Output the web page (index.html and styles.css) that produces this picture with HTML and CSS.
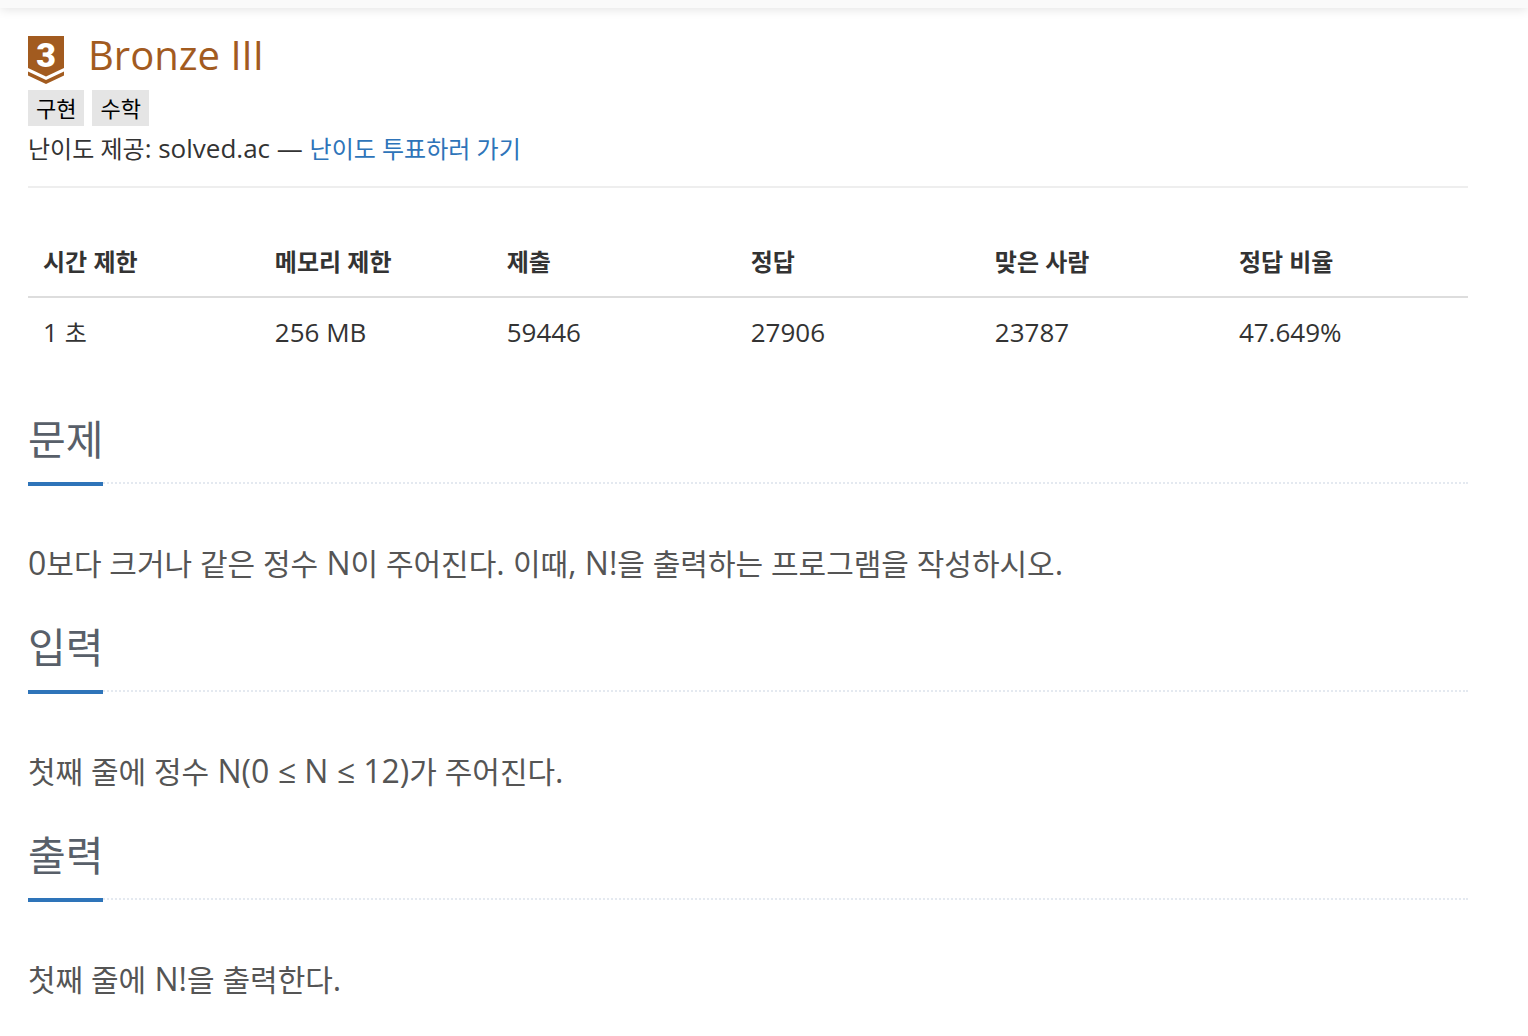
FILE: index.html
```html
<!DOCTYPE html>
<html lang="ko">
<head>
    <meta charset="UTF-8">
    <meta name="viewport" content="width=device-width, initial-scale=1.0">
    <title>Bronze III</title>
    <link rel="stylesheet" href="styles.css">
</head>
<body>

<header class="topbar"></header>

<main class="container">
    <div class="tier">
        <svg class="tier-icon" width="36" height="48" viewBox="0 0 36 48" aria-hidden="true">
            <path fill="#a25b1f" d="M0 0h36v32l-18 8.500l-18-8.500z"/>
            <path fill="#a25b1f" d="M0 35.500l18 8.500l18-8.500v4l-18 8.500l-18-8.500z"/>
            <text class="tier-number" x="18" y="31" text-anchor="middle">3</text>
        </svg>
        <h1>Bronze III</h1>
    </div>
    <div class="tags">
        <a href="#" class="tag">구현</a>
        <a href="#" class="tag">수학</a>
    </div>
    <p class="provider">난이도 제공<span class="latin">: solved.ac — </span><a href="#">난이도 투표하러 가기</a></p>
    <hr>

    <table class="info">
        <thead>
            <tr>
                <th class="limit">시간 제한</th>
                <th class="limit">메모리 제한</th>
                <th>제출</th>
                <th>정답</th>
                <th>맞은 사람</th>
                <th>정답 비율</th>
            </tr>
        </thead>
        <tbody>
            <tr>
                <td><span class="latin">1 </span>초</td>
                <td><span class="latin">256 MB</span></td>
                <td><span class="latin">59446</span></td>
                <td><span class="latin">27906</span></td>
                <td><span class="latin">23787</span></td>
                <td><span class="latin">47.649%</span></td>
            </tr>
        </tbody>
    </table>

    <section>
        <div class="headline"><h2>문제</h2></div>
        <p class="text"><span class="latin">0</span>보다 크거나 같은 정수<span class="latin"> N</span>이 주어진다<span class="latin">. </span>이때<span class="latin">, N!</span>을 출력하는 프로그램을 작성하시오<span class="latin">.</span></p>
    </section>
    <section>
        <div class="headline"><h2>입력</h2></div>
        <p class="text">첫째 줄에 정수<span class="latin"> N(0 ≤ N ≤ 12)</span>가 주어진다<span class="latin">.</span></p>
    </section>
    <section>
        <div class="headline"><h2>출력</h2></div>
        <p class="text">첫째 줄에<span class="latin"> N!</span>을 출력한다<span class="latin">.</span></p>
    </section>
</main>

</body>
</html>
```
FILE: styles.css
```css
body {
    margin: 0;
    font-family: "Open Sans", "Noto Sans CJK KR", sans-serif;
    font-size: 24px;
    line-height: 36px;
    color: #333;
    background-color: #fff;
}

a {
    color: #2e74b9;
    text-decoration: none;
}

h1, h2, p {
    margin: 0;
    font-weight: 400;
}

/* hangul is set a little smaller than the latin text beside it */
.latin {
    font-size: 26px;
}

.topbar {
    height: 8px;
    background-color: #fafafa;
    box-shadow: 0 0 12px rgba(0, 0, 0, 0.16);
}

.container {
    margin: 28px 60px 0 28px;
}

.tier {
    display: flex;
    gap: 24px;
    height: 48px;
}

.tier-icon {
    overflow: visible;
}

.tier h1 {
    font-size: 40px;
    line-height: 38px;
    color: #a25b1f;
}

.tier-number {
    font-family: Roboto, "Open Sans", sans-serif;
    font-size: 34px;
    line-height: 34px;
    font-weight: 900;
    fill: #fff;
}

.tags {
    display: flex;
    gap: 8px;
    margin-top: 6px;
}

.tag {
    padding: 0 8px;
    font-size: 22px;
    color: #000;
    background-color: #e5e5e5;
}

.provider {
    margin-top: 4px;
}

hr {
    margin: 19px 0 40px;
    border: 0;
    border-top: 2px solid #eee;
}

.info {
    width: 100%;
    margin-bottom: 39px;
    table-layout: fixed;
    border-collapse: collapse;
}

.info th,
.info td {
    box-sizing: border-box;
    padding: 16px 15px;
    text-align: left;
}

.info th {
    border-bottom: 2px solid #ddd;
    font-weight: 700;
}

.info .limit {
    width: 16.1%;
}

section {
    margin-bottom: 24px;
}

.headline {
    display: flex;
    height: 76px;
    border-bottom: 2px dotted #e4e9f0;
}

.headline h2 {
    height: 76px;
    border-bottom: 4px solid #2e74b9;
    font-size: 41px;
    line-height: 66px;
    color: #585f69;
}

.text {
    padding-top: 53px;
    font-size: 30px;
    line-height: 52px;
    color: #555;
}

.text .latin {
    font-size: 32px;
}
```
